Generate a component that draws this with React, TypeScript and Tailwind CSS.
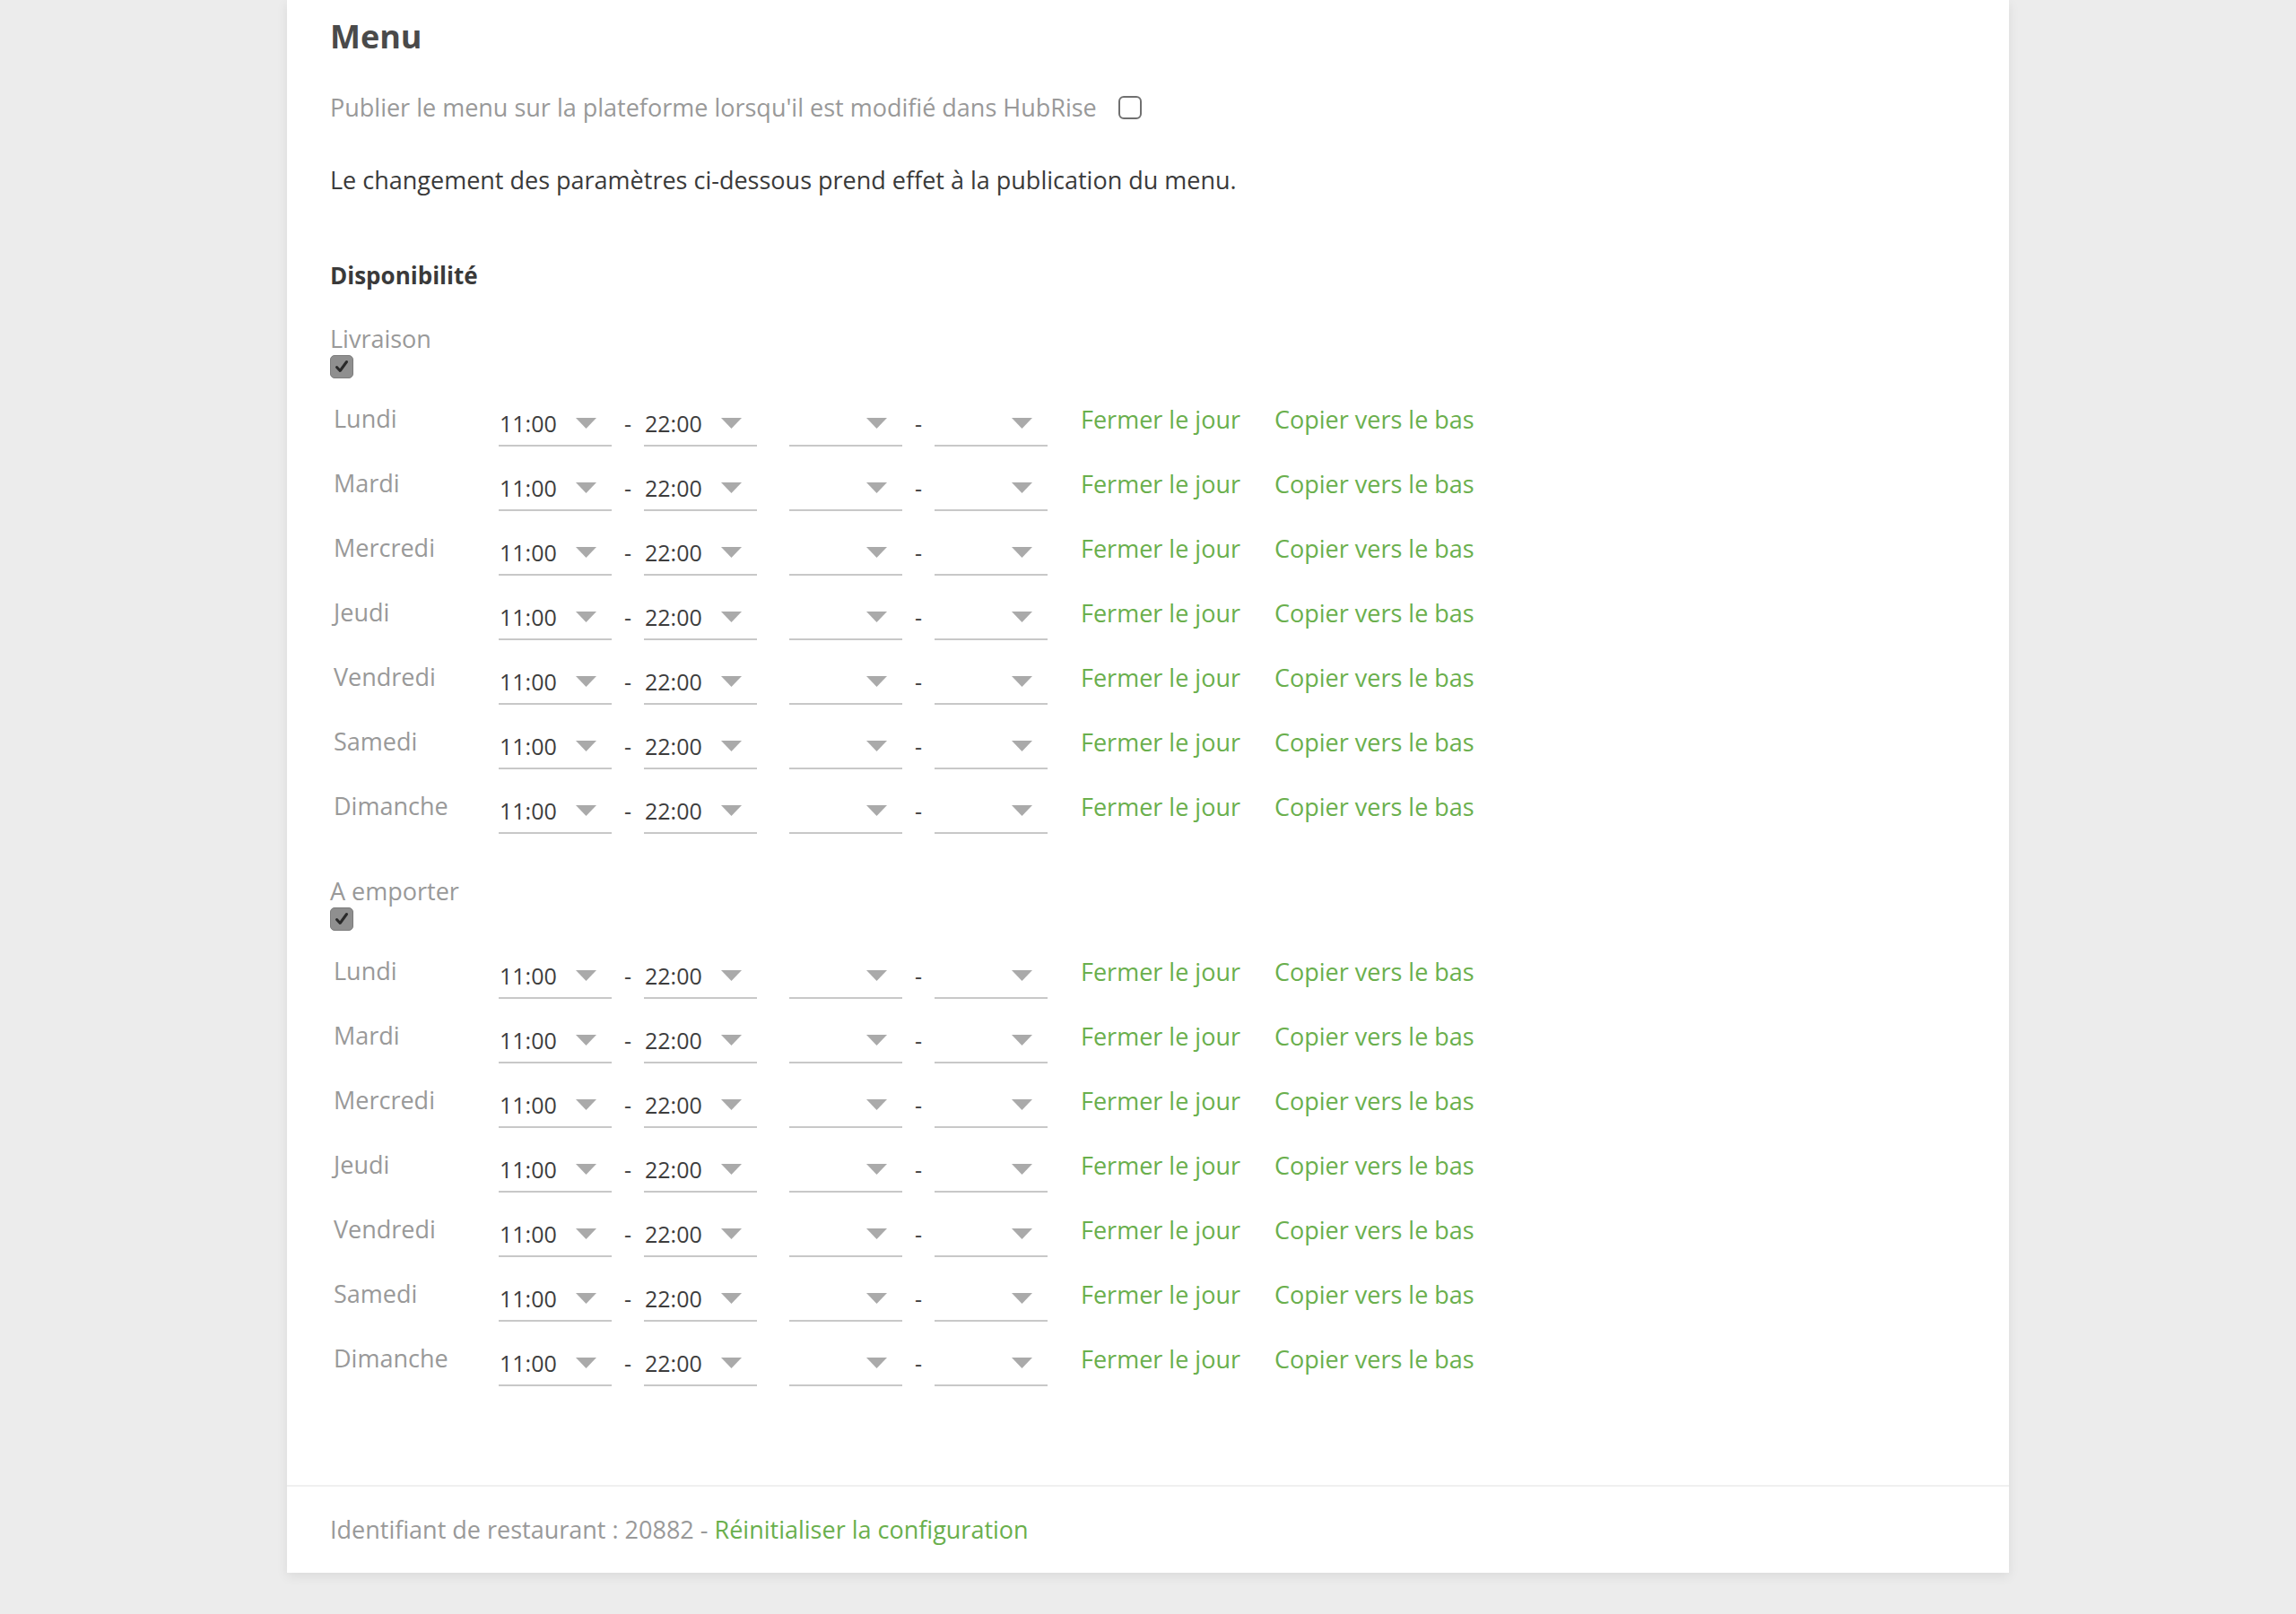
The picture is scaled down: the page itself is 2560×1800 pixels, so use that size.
import React from "react";

// Availability settings card: two services, each with a week of opening hours
const DAYS = ["Lundi", "Mardi", "Mercredi", "Jeudi", "Vendredi", "Samedi", "Dimanche"];
const SERVICES = ["Livraison", "A emporter"];

function Arrow() {
  return (
    <svg width="23" height="12" viewBox="0 0 23 12" className="shrink-0">
      <path d="M0 0H23L11.5 12Z" fill="#aaaaaa" />
    </svg>
  );
}

function TimeSelect({ value }: { value: string }) {
  return (
    <div className="w-[126px] h-[44px] pb-[6px] border-b-2 border-[#c8c8c8] flex items-center justify-between pl-[1px] pr-[17px] shrink-0">
      <span className="text-[25px] text-[#3d3d3d] leading-none">{value}</span>
      <Arrow />
    </div>
  );
}

function Dash() {
  return (
    <div className="w-[36px] h-[44px] pb-[6px] flex items-center justify-center text-[25px] text-[#444] shrink-0">
      -
    </div>
  );
}

function DayRow({ day }: { day: string }) {
  return (
    <div className="flex h-[72px]">
      <div className="w-[188px] h-[44px] pl-[4px] pb-[18px] flex items-center text-[27px] text-[#999] shrink-0">{day}</div>
      <TimeSelect value="11:00" />
      <Dash />
      <TimeSelect value="22:00" />
      <div className="w-[36px] shrink-0" />
      <TimeSelect value="" />
      <Dash />
      <TimeSelect value="" />
      <div className="ml-[37px] h-[44px] pb-[15px] flex items-center gap-[38px] text-[27px] text-[#6aaf4d] whitespace-nowrap">
        <span className="cursor-pointer">Fermer le jour</span>
        <span className="cursor-pointer">Copier vers le bas</span>
      </div>
    </div>
  );
}

function CheckedBox() {
  return (
    <div className="w-[26px] h-[26px] rounded-[5px] bg-[#8f8f8f] border border-[#7c7c7c] flex items-center justify-center">
      <svg width="18" height="18" viewBox="0 0 18 18">
        <path d="M3.5 9.5L7.2 13.5L14.5 3.5" fill="none" stroke="#2a2a2a" strokeWidth="3" strokeLinecap="round" strokeLinejoin="round" />
      </svg>
    </div>
  );
}

function Service({ name, first }: { name: string; first: boolean }) {
  return (
    <div className={first ? "mt-[33px]" : "mt-[18px]"}>
      <div className="h-[36px] flex items-center text-[27px] text-[#999]">{name}</div>
      <CheckedBox />
      <div className="mt-[32px]">
        {DAYS.map((d) => (
          <DayRow key={d} day={d} />
        ))}
      </div>
    </div>
  );
}

export default function App() {
  return (
    <div className="min-h-[1800px] bg-[#ececec]" style={{ fontFamily: '"Open Sans", "Noto Sans", sans-serif' }}>
      <div className="mx-auto w-[1920px] bg-white shadow-[0_4px_12px_rgba(0,0,0,0.08)]">
        <div className="pl-[48px] pr-[48px] pt-[17px]">
          <h1 className="h-[48px] flex items-center text-[36px] font-bold text-[#4a4a4a]">Menu</h1>

          <div className="mt-[35px] h-[40px] flex items-center gap-[24px]">
            <span className="text-[27px] text-[#999]">Publier le menu sur la plateforme lorsqu'il est modifié dans HubRise</span>
            <div className="w-[26px] h-[26px] rounded-[6px] border-2 border-[#707070] bg-white" />
          </div>

          <p className="mt-[41px] h-[40px] flex items-center text-[27px] text-[#3a3a3a]">
            Le changement des paramètres ci-dessous prend effet à la publication du menu.
          </p>

          <h2 className="mt-[66px] h-[40px] flex items-center text-[26px] font-bold text-[#3a3a3a]">Disponibilité</h2>

          {SERVICES.map((s, i) => (
            <Service key={s} name={s} first={i === 0} />
          ))}

          <div className="h-[82px]" />
        </div>

        <div className="border-t-2 border-[#f0f0f0] h-[98px] pl-[48px] flex items-center text-[27px] whitespace-pre">
          <span className="text-[#999]">Identifiant de restaurant : 20882 - </span>
          <span className="text-[#6aaf4d] cursor-pointer">Réinitialiser la configuration</span>
        </div>
      </div>
    </div>
  );
}
